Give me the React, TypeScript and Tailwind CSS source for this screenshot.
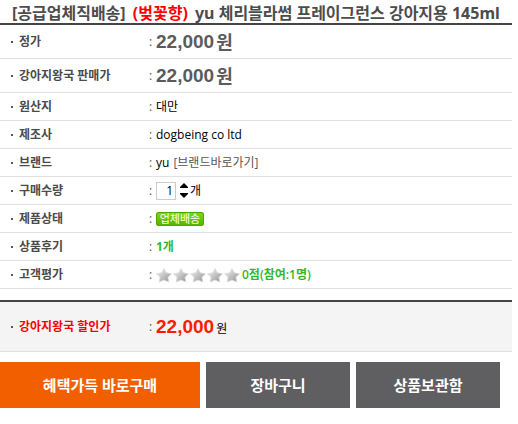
import { useState, type ReactNode } from "react";

const STAR = "M8 1.500l2.300 4.300 5.200.9-3.500 3.600.8 4.700L8 13l-4.800 2 .8-4.700L.5 6.700l5.200-.9z";

function Row({
  label,
  children,
  size = "h-7",
  tone = "text-[#4a4a4a]",
}: {
  label: ReactNode;
  children: ReactNode;
  size?: string;
  tone?: string;
}) {
  return (
    <div className={`flex items-center border-b border-[#e0e0e3] pl-[11px] ${size}`}>
      <dt className={`flex w-[138px] shrink-0 items-center gap-[6px] font-bold ${tone}`}>
        <span className="h-[2px] w-[2px] bg-[#555]" />
        {label}
      </dt>
      <dd className="flex items-center gap-1">
        <span className="w-[3px] text-[#555]">:</span>
        {children}
      </dd>
    </div>
  );
}

function Price({ color, children }: { color: string; children: ReactNode }) {
  return (
    <span className="flex items-center gap-[2px]">
      <span className={`font-['Liberation_Sans',sans-serif] text-[19px] leading-6 font-bold ${color}`}>
        22,000
      </span>
      {children}
    </span>
  );
}

function Stars() {
  return (
    <svg width="85" height="16" viewBox="0 0 85 16" role="img" aria-label="0점">
      <defs>
        <linearGradient id="star" x1="0" y1="0" x2="1" y2="1">
          <stop offset="0.1" stopColor="#ededed" />
          <stop offset="0.9" stopColor="#999" />
        </linearGradient>
      </defs>
      {[0, 17, 34, 51, 68].map((x) => (
        <path key={x} d={STAR} transform={`translate(${x} 0)`} fill="url(#star)" stroke="#dcdcdc" strokeWidth="0.8" />
      ))}
    </svg>
  );
}

export default function App() {
  const [count, setCount] = useState(1);

  return (
    <main className="bg-white pr-[6px] font-['Open_Sans','Noto_Sans_CJK_KR',sans-serif] text-xs leading-4 text-black">
      <h1 className="flex h-[25px] items-center gap-[3px] border-b-2 border-[#444] pt-[2px] pl-3 font-['Noto_Sans','Noto_Sans_CJK_KR',sans-serif] text-base leading-5 font-bold whitespace-pre text-[#4c4c4c]">
        <span>[공급업체직배송] </span>
        <span className="text-[#ff0000]">(벚꽃향) </span>
        <span>yu 체리블라썸 프레이그런스 강아지용 145ml</span>
      </h1>

      <dl>
        <Row label="정가" size="h-[34px]">
          <Price color="text-[#5b5b5d]">
            <span className="text-lg leading-6 font-bold text-[#5b5b5d]">원</span>
          </Price>
        </Row>
        <Row label="강아지왕국 판매가" size="h-[34px]">
          <Price color="text-[#5b5b5d]">
            <span className="text-lg leading-6 font-bold text-[#5b5b5d]">원</span>
          </Price>
        </Row>
        <Row label="원산지">대만</Row>
        <Row label="제조사">dogbeing co ltd</Row>
        <Row label="브랜드">
          yu{" "}
          <a href="#brand" className="text-[#555]">
            [브랜드바로가기]
          </a>
        </Row>
        <Row label={<label htmlFor="count">구매수량</label>}>
          <input
            id="count"
            type="text"
            inputMode="numeric"
            value={count}
            onChange={(e) => setCount(Number(e.target.value) || 1)}
            className="h-[18px] w-5 border border-[#ccc] pr-[2px] text-right"
          />
          <span className="flex items-center gap-[2px]">
            <span className="flex flex-col gap-[5px]">
              <button type="button" aria-label="수량 증가" onClick={() => setCount(count + 1)}>
                <svg width="8" height="5" viewBox="0 0 8 5" className="block">
                  <path d="M4 0l4 4v1H0V4z" />
                </svg>
              </button>
              <button type="button" aria-label="수량 감소" onClick={() => setCount(Math.max(1, count - 1))}>
                <svg width="8" height="5" viewBox="0 0 8 5" className="block">
                  <path d="M4 5L0 1V0h8v1z" />
                </svg>
              </button>
            </span>
            <span>개</span>
          </span>
        </Row>
        <Row label="제품상태">
          <span className="flex h-[14px] w-12 items-center justify-center rounded-[2px] border border-[#4fa600] bg-linear-to-b from-[#7ad80c] to-[#58b400] text-[11px] leading-3 text-white">
            업체배송
          </span>
        </Row>
        <Row label="상품후기">
          <span className="font-bold text-[#2eb82e]">1개</span>
        </Row>
        <Row label="고객평가">
          <span className="flex items-center gap-px">
            <Stars />
            <span className="font-semibold text-[#2eb82e]">0점(참여:1명)</span>
          </span>
        </Row>
      </dl>

      <dl className="mt-[11px] border-t-2 border-[#444] bg-[#f4f4f4]">
        <Row label="강아지왕국 할인가" size="h-[50px]" tone="text-[#ff0000]">
          <Price color="text-[#ff1a00]">
            <span className="pt-1">원</span>
          </Price>
        </Row>
      </dl>

      <div className="mt-[10px] grid grid-cols-[200fr_144fr_144fr] gap-[6px] pr-3 text-[15px] font-bold text-white">
        <button type="button" className="h-[46px] bg-[#f25f00]">
          혜택가득 바로구매
        </button>
        <button type="button" className="h-[46px] bg-[#5f5f61]">
          장바구니
        </button>
        <button type="button" className="h-[46px] bg-[#5f5f61]">
          상품보관함
        </button>
      </div>
    </main>
  );
}
